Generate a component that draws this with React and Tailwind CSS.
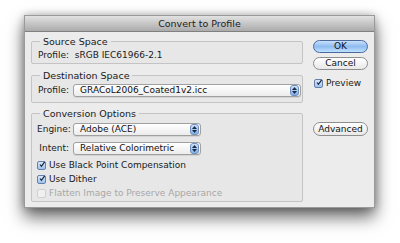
import React from "react";

const font = { fontFamily: '"DejaVu Sans", "Liberation Sans", sans-serif' };

const Stepper = () => (
  <div className="w-[9px] h-[11px] rounded-[3px] bg-gradient-to-b from-[#cfe3fb] to-[#7fb1ea] border border-[#6f8fbf] flex flex-col items-center justify-center gap-[1px]">
    <svg width="5" height="3" viewBox="0 0 5 3"><path d="M0 3 L2.5 0 L5 3 Z" fill="#1b2a44" /></svg>
    <svg width="5" height="3" viewBox="0 0 5 3"><path d="M0 0 L2.5 3 L5 0 Z" fill="#1b2a44" /></svg>
  </div>
);

const Popup = ({ value, w }) => (
  <div className={`${w} h-[13px] flex items-center justify-between pl-[6px] pr-[1px] rounded-[3px] border border-[#a0a0a0] bg-gradient-to-b from-white to-[#ececec] shadow-[0_1px_0_rgba(0,0,0,0.08)]`}>
    <span className="text-[9px] leading-none text-[#111]">{value}</span>
    <Stepper />
  </div>
);

const Check = ({ on, disabled }) => (
  <div className={`w-[9px] h-[9px] rounded-[2px] border ${disabled ? "border-[#d0d0d0] bg-[#f0f0f0]" : "border-[#6a7fa8] bg-gradient-to-b from-[#d9e8fb] to-[#9cc2ee]"} flex items-center justify-center`}>
    {on && (
      <svg width="9" height="9" viewBox="0 0 9 9" className="-mt-[2px] ml-[1px]">
        <path d="M1.5 4.5 L3.6 7.2 L8.5 0.6" stroke="#14213a" strokeWidth="1.7" fill="none" />
      </svg>
    )}
  </div>
);

const Group = ({ title, className, children }) => (
  <fieldset className={`border border-[#c4c4c4] rounded-[2px] bg-[#e7e7e7] ${className}`}>
    <legend className="ml-[8px] px-[3px] text-[9.5px] leading-[11px] text-[#1a1a1a]">{title}</legend>
    {children}
  </fieldset>
);

const App = () => {
  return (
    <div className="w-[400px] h-[243px] bg-white overflow-hidden pt-[15px] pl-[24px]" style={font}>
      <div className="w-[351px] h-[193px] bg-[#ececec] border border-[#9a9a9a] shadow-[0_9px_16px_rgba(0,0,0,0.6),0_0_8px_rgba(0,0,0,0.25)] flex flex-col">
        <div className="h-[16px] bg-gradient-to-b from-[#e2e2e2] to-[#ababab] border-b border-[#808080] flex items-center justify-center">
          <span className="text-[9.5px] text-[#1c1c1c] leading-none">Convert to Profile</span>
        </div>
        <div className="flex flex-1 pl-[6px] pr-[6px]">
          <div className="w-[272px] flex flex-col pt-[4px]">
            <Group title="Source Space" className="h-[28px]">
              <div className="pl-[6px] pt-[4px] text-[9px] leading-none text-[#1a1a1a]">
                Profile:&nbsp;&nbsp;sRGB IEC61966-2.1
              </div>
            </Group>
            <Group title="Destination Space" className="h-[33px] mt-[6px]">
              <div className="flex items-center pl-[6px] pt-[3px] gap-[4px]">
                <span className="text-[9px] leading-none text-[#1a1a1a]">Profile:</span>
                <Popup value="GRACoL2006_Coated1v2.icc" w="w-[228px]" />
              </div>
            </Group>
            <Group title="Conversion Options" className="h-[94px] mt-[5px]">
              <div className="flex flex-col pl-[5px] pt-[4px]">
                <div className="flex items-center gap-[4px]">
                  <span className="w-[32px] text-right text-[9px] leading-none text-[#1a1a1a]">Engine:</span>
                  <Popup value="Adobe (ACE)" w="w-[128px]" />
                </div>
                <div className="flex items-center gap-[4px] mt-[6px]">
                  <span className="w-[32px] text-right text-[9px] leading-none text-[#1a1a1a]">Intent:</span>
                  <Popup value="Relative Colorimetric" w="w-[128px]" />
                </div>
                <div className="flex items-center gap-[3px] mt-[6px]">
                  <Check on />
                  <span className="text-[9px] leading-none text-[#1a1a1a]">Use Black Point Compensation</span>
                </div>
                <div className="flex items-center gap-[3px] mt-[5px]">
                  <Check on />
                  <span className="text-[9px] leading-none text-[#1a1a1a]">Use Dither</span>
                </div>
                <div className="flex items-center gap-[3px] mt-[5px]">
                  <Check disabled />
                  <span className="text-[9px] leading-none text-[#a8a8a8]">Flatten Image to Preserve Appearance</span>
                </div>
              </div>
            </Group>
          </div>
          <div className="ml-[10px] w-[55px] flex flex-col pt-[8px]">
            <div className="h-[13px] rounded-full border border-[#4a6a9c] bg-gradient-to-b from-[#c9e0fb] via-[#8fbcf0] to-[#bfe0ff] flex items-center justify-center text-[9px] leading-none text-[#111]">
              OK
            </div>
            <div className="h-[13px] mt-[4px] rounded-full border border-[#8e8e8e] bg-gradient-to-b from-white to-[#e8e8e8] flex items-center justify-center text-[9px] leading-none text-[#111]">
              Cancel
            </div>
            <div className="flex items-center gap-[3px] mt-[9px] pl-[1px]">
              <Check on />
              <span className="text-[9px] leading-none text-[#1a1a1a]">Preview</span>
            </div>
            <div className="h-[14px] mt-[34px] rounded-full border border-[#8e8e8e] bg-gradient-to-b from-white to-[#e8e8e8] flex items-center justify-center text-[9px] leading-none text-[#111]">
              Advanced
            </div>
          </div>
        </div>
      </div>
    </div>
  );
};

export default App;
